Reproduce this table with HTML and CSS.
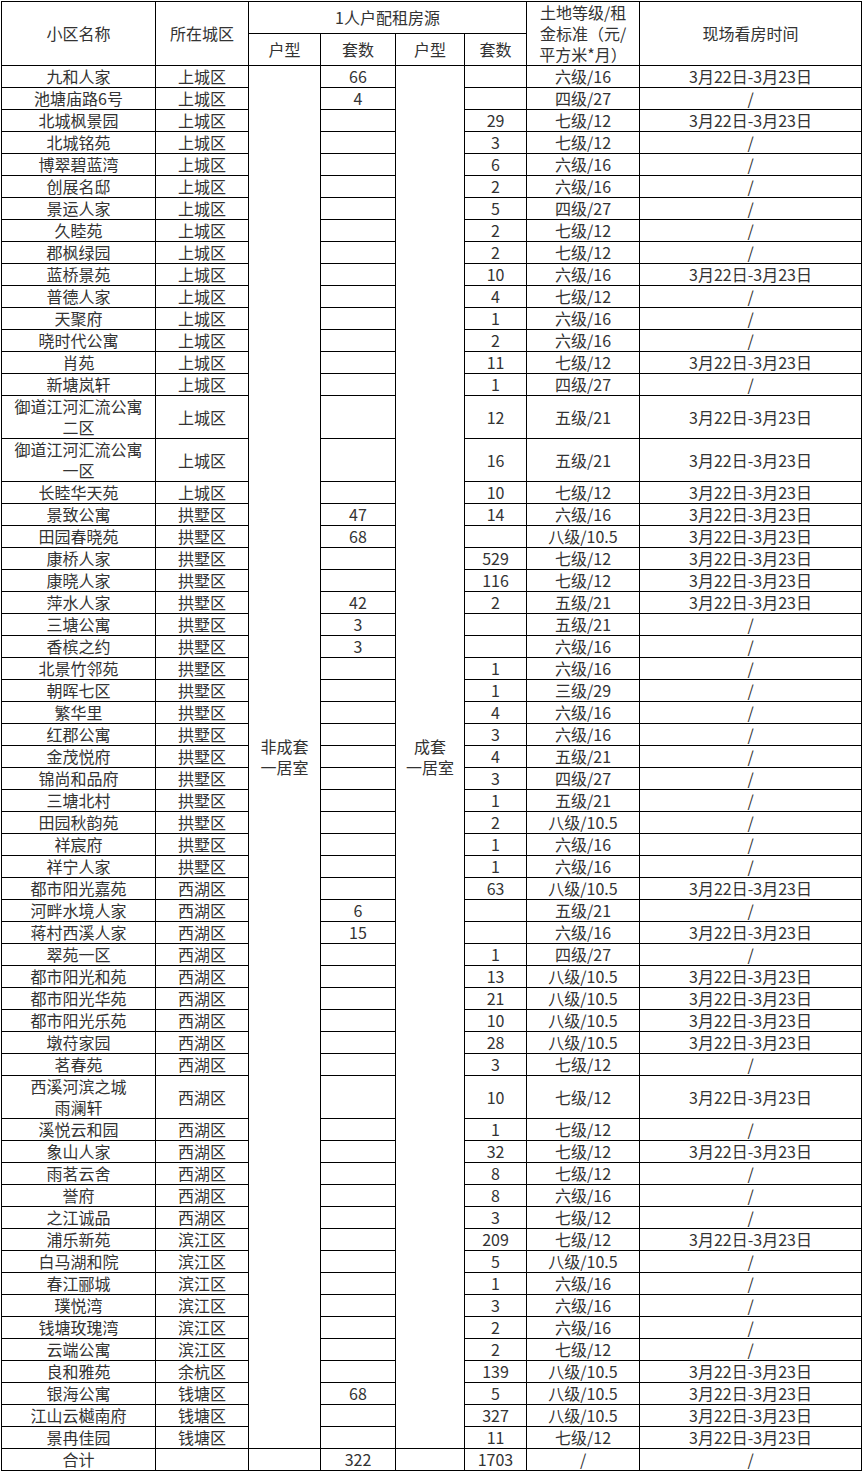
FILE: index.html
```html
<!DOCTYPE html>
<html lang="zh-CN">
<head>
<meta charset="utf-8">
<title>1人户配租房源</title>
<link rel="stylesheet" href="styles.css">
</head>
<body>
<div class="wrap">
<table class="tbl">
<colgroup>
<col class="c1"><col class="c2"><col class="c3"><col class="c4"><col class="c5"><col class="c6"><col class="c7"><col class="c8">
</colgroup>
<thead>
<tr class="hr1">
<td rowspan="2">小区名称</td>
<td rowspan="2">所在城区</td>
<td colspan="4">1人户配租房源</td>
<td rowspan="2">土地等级/租<br>金标准（元/<br>平方米*月）</td>
<td rowspan="2">现场看房时间</td>
</tr>
<tr class="hr2">
<td>户型</td><td>套数</td><td>户型</td><td>套数</td>
</tr>
</thead>
<tbody>
<tr><td>九和人家</td><td>上城区</td><td rowspan="60">非成套<br>一居室</td><td>66</td><td rowspan="60">成套<br>一居室</td><td></td><td>六级/16</td><td>3月22日-3月23日</td></tr>
<tr><td>池塘庙路6号</td><td>上城区</td><td>4</td><td></td><td>四级/27</td><td>/</td></tr>
<tr><td>北城枫景园</td><td>上城区</td><td></td><td>29</td><td>七级/12</td><td>3月22日-3月23日</td></tr>
<tr><td>北城铭苑</td><td>上城区</td><td></td><td>3</td><td>七级/12</td><td>/</td></tr>
<tr><td>博翠碧蓝湾</td><td>上城区</td><td></td><td>6</td><td>六级/16</td><td>/</td></tr>
<tr><td>创展名邸</td><td>上城区</td><td></td><td>2</td><td>六级/16</td><td>/</td></tr>
<tr><td>景运人家</td><td>上城区</td><td></td><td>5</td><td>四级/27</td><td>/</td></tr>
<tr><td>久睦苑</td><td>上城区</td><td></td><td>2</td><td>七级/12</td><td>/</td></tr>
<tr><td>郡枫绿园</td><td>上城区</td><td></td><td>2</td><td>七级/12</td><td>/</td></tr>
<tr><td>蓝桥景苑</td><td>上城区</td><td></td><td>10</td><td>六级/16</td><td>3月22日-3月23日</td></tr>
<tr><td>普德人家</td><td>上城区</td><td></td><td>4</td><td>七级/12</td><td>/</td></tr>
<tr><td>天聚府</td><td>上城区</td><td></td><td>1</td><td>六级/16</td><td>/</td></tr>
<tr><td>晓时代公寓</td><td>上城区</td><td></td><td>2</td><td>六级/16</td><td>/</td></tr>
<tr><td>肖苑</td><td>上城区</td><td></td><td>11</td><td>七级/12</td><td>3月22日-3月23日</td></tr>
<tr><td>新塘岚轩</td><td>上城区</td><td></td><td>1</td><td>四级/27</td><td>/</td></tr>
<tr><td>御道江河汇流公寓<br>二区</td><td>上城区</td><td></td><td>12</td><td>五级/21</td><td>3月22日-3月23日</td></tr>
<tr><td>御道江河汇流公寓<br>一区</td><td>上城区</td><td></td><td>16</td><td>五级/21</td><td>3月22日-3月23日</td></tr>
<tr><td>长睦华天苑</td><td>上城区</td><td></td><td>10</td><td>七级/12</td><td>3月22日-3月23日</td></tr>
<tr><td>景致公寓</td><td>拱墅区</td><td>47</td><td>14</td><td>六级/16</td><td>3月22日-3月23日</td></tr>
<tr><td>田园春晓苑</td><td>拱墅区</td><td>68</td><td></td><td>八级/10.5</td><td>3月22日-3月23日</td></tr>
<tr><td>康桥人家</td><td>拱墅区</td><td></td><td>529</td><td>七级/12</td><td>3月22日-3月23日</td></tr>
<tr><td>康晓人家</td><td>拱墅区</td><td></td><td>116</td><td>七级/12</td><td>3月22日-3月23日</td></tr>
<tr><td>萍水人家</td><td>拱墅区</td><td>42</td><td>2</td><td>五级/21</td><td>3月22日-3月23日</td></tr>
<tr><td>三塘公寓</td><td>拱墅区</td><td>3</td><td></td><td>五级/21</td><td>/</td></tr>
<tr><td>香槟之约</td><td>拱墅区</td><td>3</td><td></td><td>六级/16</td><td>/</td></tr>
<tr><td>北景竹邻苑</td><td>拱墅区</td><td></td><td>1</td><td>六级/16</td><td>/</td></tr>
<tr><td>朝晖七区</td><td>拱墅区</td><td></td><td>1</td><td>三级/29</td><td>/</td></tr>
<tr><td>繁华里</td><td>拱墅区</td><td></td><td>4</td><td>六级/16</td><td>/</td></tr>
<tr><td>红郡公寓</td><td>拱墅区</td><td></td><td>3</td><td>六级/16</td><td>/</td></tr>
<tr><td>金茂悦府</td><td>拱墅区</td><td></td><td>4</td><td>五级/21</td><td>/</td></tr>
<tr><td>锦尚和品府</td><td>拱墅区</td><td></td><td>3</td><td>四级/27</td><td>/</td></tr>
<tr><td>三塘北村</td><td>拱墅区</td><td></td><td>1</td><td>五级/21</td><td>/</td></tr>
<tr><td>田园秋韵苑</td><td>拱墅区</td><td></td><td>2</td><td>八级/10.5</td><td>/</td></tr>
<tr><td>祥宸府</td><td>拱墅区</td><td></td><td>1</td><td>六级/16</td><td>/</td></tr>
<tr><td>祥宁人家</td><td>拱墅区</td><td></td><td>1</td><td>六级/16</td><td>/</td></tr>
<tr><td>都市阳光嘉苑</td><td>西湖区</td><td></td><td>63</td><td>八级/10.5</td><td>3月22日-3月23日</td></tr>
<tr><td>河畔水境人家</td><td>西湖区</td><td>6</td><td></td><td>五级/21</td><td>/</td></tr>
<tr><td>蒋村西溪人家</td><td>西湖区</td><td>15</td><td></td><td>六级/16</td><td>3月22日-3月23日</td></tr>
<tr><td>翠苑一区</td><td>西湖区</td><td></td><td>1</td><td>四级/27</td><td>/</td></tr>
<tr><td>都市阳光和苑</td><td>西湖区</td><td></td><td>13</td><td>八级/10.5</td><td>3月22日-3月23日</td></tr>
<tr><td>都市阳光华苑</td><td>西湖区</td><td></td><td>21</td><td>八级/10.5</td><td>3月22日-3月23日</td></tr>
<tr><td>都市阳光乐苑</td><td>西湖区</td><td></td><td>10</td><td>八级/10.5</td><td>3月22日-3月23日</td></tr>
<tr><td>墩苻家园</td><td>西湖区</td><td></td><td>28</td><td>八级/10.5</td><td>3月22日-3月23日</td></tr>
<tr><td>茗春苑</td><td>西湖区</td><td></td><td>3</td><td>七级/12</td><td>/</td></tr>
<tr><td>西溪河滨之城<br>雨澜轩</td><td>西湖区</td><td></td><td>10</td><td>七级/12</td><td>3月22日-3月23日</td></tr>
<tr><td>溪悦云和园</td><td>西湖区</td><td></td><td>1</td><td>七级/12</td><td>/</td></tr>
<tr><td>象山人家</td><td>西湖区</td><td></td><td>32</td><td>七级/12</td><td>3月22日-3月23日</td></tr>
<tr><td>雨茗云舍</td><td>西湖区</td><td></td><td>8</td><td>七级/12</td><td>/</td></tr>
<tr><td>誉府</td><td>西湖区</td><td></td><td>8</td><td>六级/16</td><td>/</td></tr>
<tr><td>之江诚品</td><td>西湖区</td><td></td><td>3</td><td>七级/12</td><td>/</td></tr>
<tr><td>浦乐新苑</td><td>滨江区</td><td></td><td>209</td><td>七级/12</td><td>3月22日-3月23日</td></tr>
<tr><td>白马湖和院</td><td>滨江区</td><td></td><td>5</td><td>八级/10.5</td><td>/</td></tr>
<tr><td>春江郦城</td><td>滨江区</td><td></td><td>1</td><td>六级/16</td><td>/</td></tr>
<tr><td>璞悦湾</td><td>滨江区</td><td></td><td>3</td><td>六级/16</td><td>/</td></tr>
<tr><td>钱塘玫瑰湾</td><td>滨江区</td><td></td><td>2</td><td>六级/16</td><td>/</td></tr>
<tr><td>云端公寓</td><td>滨江区</td><td></td><td>2</td><td>七级/12</td><td>/</td></tr>
<tr><td>良和雅苑</td><td>余杭区</td><td></td><td>139</td><td>八级/10.5</td><td>3月22日-3月23日</td></tr>
<tr><td>银海公寓</td><td>钱塘区</td><td>68</td><td>5</td><td>八级/10.5</td><td>3月22日-3月23日</td></tr>
<tr><td>江山云樾南府</td><td>钱塘区</td><td></td><td>327</td><td>八级/10.5</td><td>3月22日-3月23日</td></tr>
<tr><td>景冉佳园</td><td>钱塘区</td><td></td><td>11</td><td>七级/12</td><td>3月22日-3月23日</td></tr>
<tr><td>合计</td><td></td><td></td><td>322</td><td></td><td>1703</td><td>/</td><td>/</td></tr>
</tbody>
</table>
</div>
</body>
</html>
```

FILE: styles.css
```css
html, body {
  margin: 0;
  padding: 0;
  background: #fff;
}
.wrap {
  padding: 1px 0 0 1px;
}
.tbl {
  border-collapse: collapse;
  table-layout: fixed;
  width: 860px;
  font-family: "Noto Sans CJK SC", "Noto Sans", sans-serif;
  font-size: 16px;
  color: #333;
}
.c1 { width: 154px; }
.c2 { width: 93px; }
.c3 { width: 72px; }
.c4 { width: 75px; }
.c5 { width: 69px; }
.c6 { width: 62px; }
.c7 { width: 113px; }
.c8 { width: 222px; }
.tbl td {
  border: 1px solid #000;
  padding: 0;
  line-height: 21px;
  text-align: center;
  vertical-align: middle;
  white-space: nowrap;
}
.hr1, .hr2 {
  height: 32px;
}
```
